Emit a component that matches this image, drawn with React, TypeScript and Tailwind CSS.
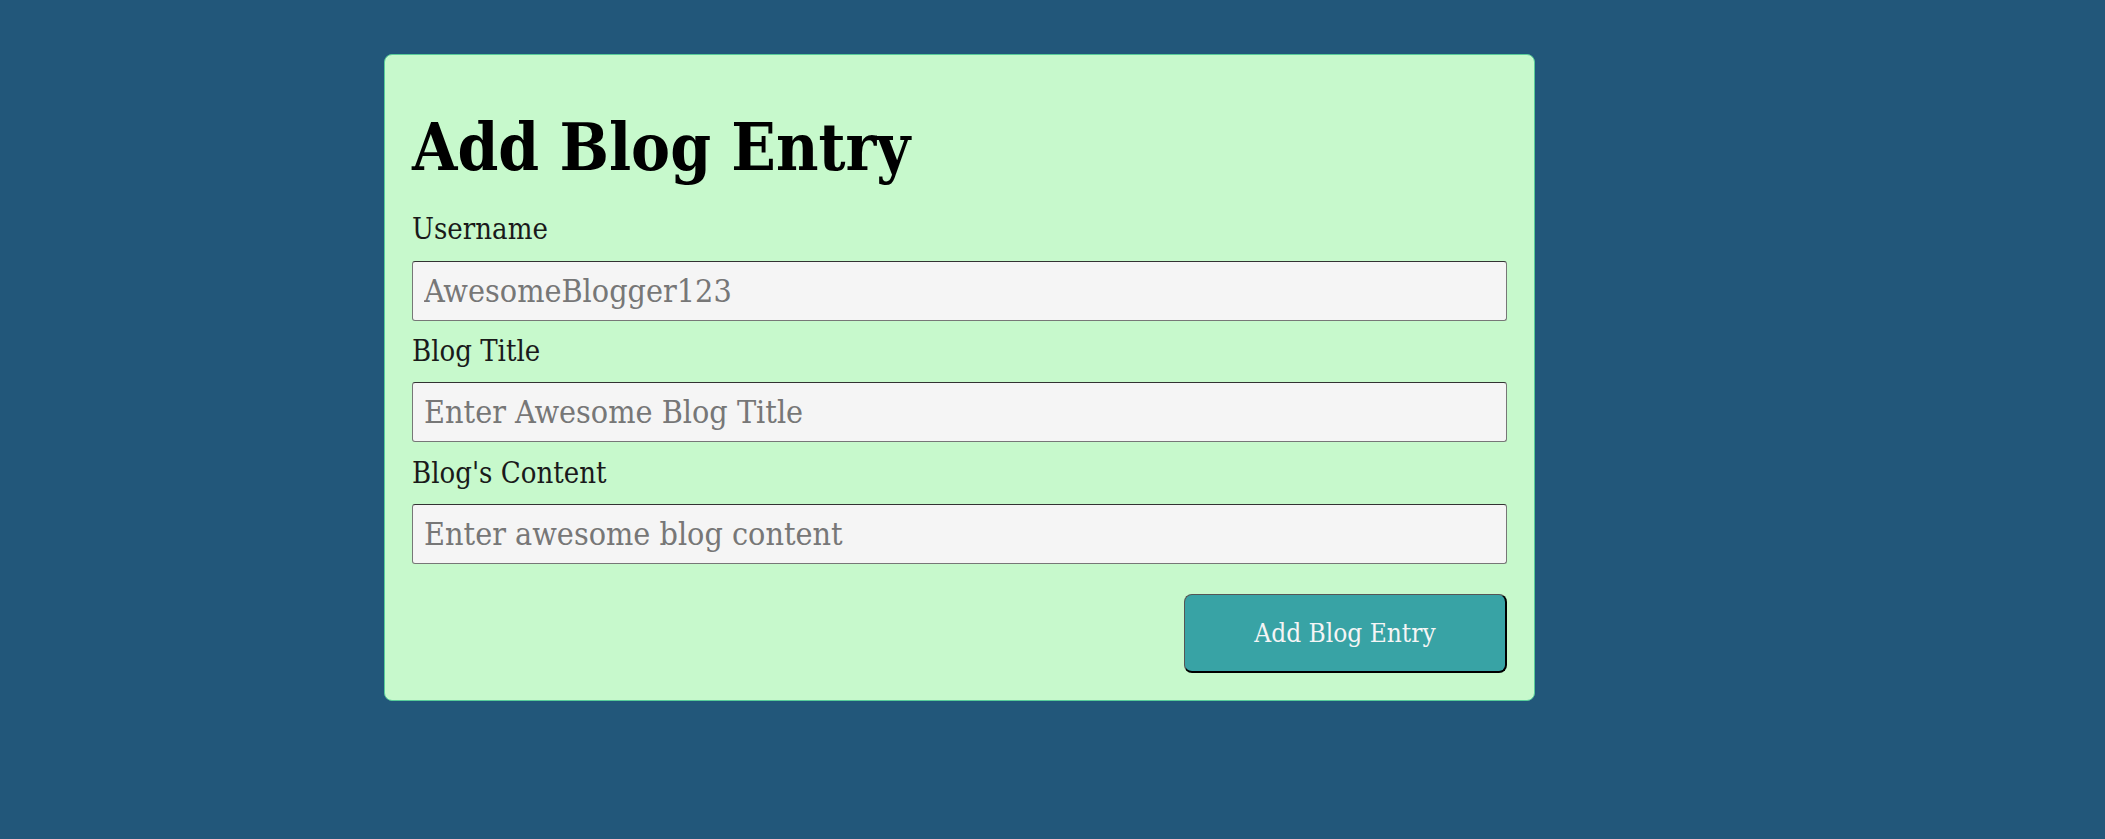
export default function App() {
  return (
    <div className="min-h-screen w-full bg-[#22577A] pt-[54px] font-[family-name:'DejaVu_Serif_Condensed','DejaVu_Serif',serif]">
      <form className="ml-[384px] flex w-[1151px] flex-col rounded-lg border border-[#57CC99] bg-[#C7F9CC] px-[27px] pt-[60px] pb-[27px]">
        <h1 className="text-[65px] leading-none font-bold text-black">Add Blog Entry</h1>

        <label className="mt-[35px] text-[29px] leading-none text-[#1a1a1a]">Username</label>
        <input
          className="mt-[17px] h-[60px] w-full rounded-[3px] border border-[#777] border-t-[#333] bg-[#f5f5f5] px-[11px] text-[32px] text-[#1a1a1a] outline-none placeholder:text-[#777]"
          placeholder="AwesomeBlogger123"
        />

        <label className="mt-[16px] text-[29px] leading-none text-[#1a1a1a]">Blog Title</label>
        <input
          className="mt-[16px] h-[60px] w-full rounded-[3px] border border-[#777] border-t-[#333] bg-[#f5f5f5] px-[11px] text-[32px] text-[#1a1a1a] outline-none placeholder:text-[#777]"
          placeholder="Enter Awesome Blog Title"
        />

        <label className="mt-[17px] text-[29px] leading-none text-[#1a1a1a]">Blog's Content</label>
        <input
          className="mt-[16px] h-[60px] w-full rounded-[3px] border border-[#777] border-t-[#333] bg-[#f5f5f5] px-[11px] text-[32px] text-[#1a1a1a] outline-none placeholder:text-[#777]"
          placeholder="Enter awesome blog content"
        />

        <button
          type="button"
          className="mt-[30px] h-[79px] w-[323px] self-end rounded-lg border border-[#555] border-r-2 border-b-2 border-r-black border-b-black bg-[#38A3A5] text-[26px] text-[#f5f5f5]"
        >
          Add Blog Entry
        </button>
      </form>
    </div>
  );
}
